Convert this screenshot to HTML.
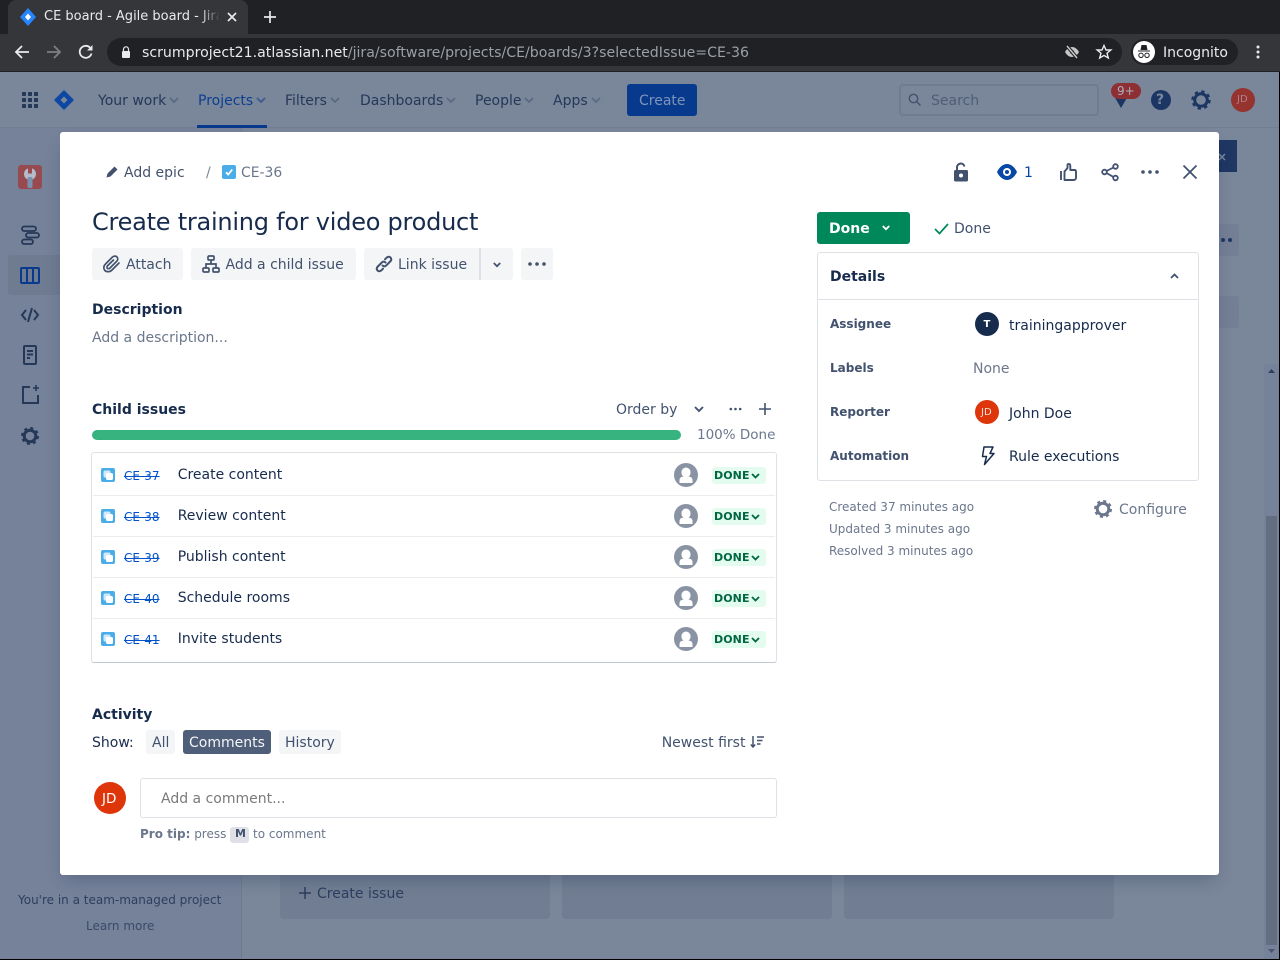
<!DOCTYPE html>
<html><head><meta charset="utf-8"><style>
*{box-sizing:border-box}
html,body{margin:0;padding:0;width:1280px;height:960px;overflow:hidden;background:#7a869a;font-family:"DejaVu Sans","Liberation Sans",sans-serif}
.t{position:absolute;white-space:nowrap;font-size:14px;line-height:20px;color:#42526e}
.b{position:absolute}
svg{position:absolute;overflow:visible}
.nav{color:#253858}
.btn{position:absolute;background:#f4f5f7;border-radius:3px}
.row{position:absolute;left:93px;width:682px;height:1px;background:#ebecf0}
.key{color:#0052cc;font-size:12px;text-decoration:line-through}
.ti{color:#172b4d}
.lz{position:absolute;left:712px;width:54px;height:17px;background:#e3fcef;border-radius:3px}
.lzt{position:absolute;font-size:11px;font-weight:700;color:#006644;line-height:17px;letter-spacing:.1px}
.lab{font-size:12px;font-weight:700;color:#42526e}
.meta{font-size:12px;color:#6b778c}
</style></head><body>
<!-- chrome -->
<div class="b" style="left:0;top:0;width:1280px;height:34px;background:#202124"></div>
<div class="b" style="left:8px;top:0;width:240px;height:34px;background:#35363a;border-radius:8px 8px 0 0"></div>
<svg style="left:20px;top:8px" width="16" height="18" viewBox="0 0 16 18"><path d="M8 0L16 9L8 18L0 9Z" fill="#2684ff"/><path d="M8 5.500L11 9L8 12.500L5 9Z" fill="#fff"/></svg>
<div class="t" style="left:44px;top:6px;width:176px;overflow:hidden;font-size:13px;line-height:20px;color:#e8eaed;padding-top:1px;height:22px">CE board - Agile board - Jira</div>
<div class="b" style="left:200px;top:5px;width:20px;height:24px;background:linear-gradient(90deg,rgba(53,54,58,0),#35363a)"></div>
<svg style="left:227px;top:12px" width="10" height="10" viewBox="0 0 10 10"><path d="M1 1L9 9M9 1L1 9" stroke="#e8eaed" stroke-width="1.700"/></svg>
<svg style="left:264px;top:11px" width="12" height="12" viewBox="0 0 12 12"><path d="M6 0V12M0 6H12" stroke="#e8eaed" stroke-width="1.700"/></svg>
<div class="b" style="left:0;top:34px;width:1280px;height:37px;background:#35363a"></div>
<div class="b" style="left:0;top:71px;width:1280px;height:1px;background:#202124"></div>
<svg style="left:14px;top:44px" width="16" height="16" viewBox="0 0 16 16"><path d="M15 8H2M8 2L2 8L8 14" stroke="#e8eaed" stroke-width="1.800" fill="none"/></svg>
<svg style="left:46px;top:44px" width="16" height="16" viewBox="0 0 16 16"><path d="M1 8H14M8 2L14 8L8 14" stroke="#7f8083" stroke-width="1.800" fill="none"/></svg>
<svg style="left:78px;top:44px" width="16" height="16" viewBox="0 0 16 16"><path d="M13.500 9.500A6 6 0 1 1 12 3.600" stroke="#e8eaed" stroke-width="1.800" fill="none"/><path d="M14.500 1V6.500H9Z" fill="#e8eaed"/></svg>
<div class="b" style="left:107px;top:38px;width:1015px;height:28px;background:#202124;border-radius:14px"></div>
<svg style="left:121px;top:46px" width="10" height="12" viewBox="0 0 10 12"><path d="M2.500 5V3.300a2.500 2.500 0 0 1 5 0V5" stroke="#e8eaed" stroke-width="1.200" fill="none"/><rect x="1" y="5" width="8" height="7" rx="1" fill="#e8eaed"/></svg>
<div class="t" style="left:142px;top:43px;font-size:14.140px;color:#e8eaed">scrumproject21.atlassian.net<span style="color:#9aa0a6">/jira/software/projects/CE/boards/3?selectedIssue=CE-36</span></div>
<svg style="left:1064px;top:45px" width="16" height="14" viewBox="0 0 16 14"><path d="M1 7C3 3.500 5.500 2 8 2S13 3.500 15 7C13 10.500 10.500 12 8 12S3 10.500 1 7Z" fill="#c4c7c5"/><circle cx="8" cy="7" r="2" fill="#202124"/><path d="M3 1L13 13" stroke="#202124" stroke-width="3.500"/><path d="M3 1L13 13" stroke="#c4c7c5" stroke-width="1.500"/></svg>
<svg style="left:1096px;top:44px" width="16" height="16" viewBox="0 0 16 16"><path d="M8 1.500L10 6H14.800L11 9.200L12.300 14L8 11.400L3.700 14L5 9.200L1.200 6H6Z" stroke="#e8eaed" stroke-width="1.400" fill="none"/></svg>
<div class="b" style="left:1131px;top:39px;width:107px;height:26px;background:#202124;border-radius:13px"></div>
<div class="b" style="left:1133px;top:41px;width:22px;height:22px;background:#fff;border-radius:50%"></div>
<svg style="left:1136px;top:45px" width="16" height="14" viewBox="0 0 16 14"><path d="M4.500 5L5.500 0H10.500L11.500 5Z" fill="#202124"/><path d="M2 6H14" stroke="#202124" stroke-width="1"/><circle cx="5" cy="10.300" r="2.200" stroke="#202124" stroke-width="1" fill="none"/><circle cx="11" cy="10.300" r="2.200" stroke="#202124" stroke-width="1" fill="none"/></svg>
<div class="t" style="left:1163px;top:43px;color:#e8eaed">Incognito</div>
<svg style="left:1256px;top:45px" width="4" height="14" viewBox="0 0 4 14"><circle cx="2" cy="2" r="1.500" fill="#e8eaed"/><circle cx="2" cy="7" r="1.500" fill="#e8eaed"/><circle cx="2" cy="12" r="1.500" fill="#e8eaed"/></svg>

<!-- jira nav -->
<div class="b" style="left:0;top:72px;width:1280px;height:56px;background:#7a869a"></div>
<div class="b" style="left:0;top:127px;width:1280px;height:1px;background:#727e93"></div>
<svg style="left:22px;top:92px" width="16" height="16" viewBox="0 0 16 16" fill="#253858"><rect width="4" height="4" rx=".5"/><rect x="6" width="4" height="4" rx=".5"/><rect x="12" width="4" height="4" rx=".5"/><rect y="6" width="4" height="4" rx=".5"/><rect x="6" y="6" width="4" height="4" rx=".5"/><rect x="12" y="6" width="4" height="4" rx=".5"/><rect y="12" width="4" height="4" rx=".5"/><rect x="6" y="12" width="4" height="4" rx=".5"/><rect x="12" y="12" width="4" height="4" rx=".5"/></svg>
<svg style="left:54px;top:90px" width="20" height="20" viewBox="0 0 20 20"><path d="M10 0L20 10L10 20L0 10Z" fill="#0d47a1"/><path d="M10 6.500L13.500 10L10 13.500L6.500 10Z" fill="#7a869a"/></svg>
<div class="t nav" style="left:98px;top:91px">Your work</div>
<div class="t" style="left:198px;top:91px;color:#0b3f91">Projects</div>
<div class="b" style="left:197px;top:125px;width:70px;height:3px;background:#073a8c"></div>
<div class="t nav" style="left:285px;top:91px">Filters</div>
<div class="t nav" style="left:360px;top:91px">Dashboards</div>
<div class="t nav" style="left:475px;top:91px">People</div>
<div class="t nav" style="left:553px;top:91px">Apps</div>
<svg style="left:169px;top:97px" width="10" height="6" viewBox="0 0 10 6"><path d="M1 1L5 5L9 1" stroke="#5a6a85" stroke-width="1.800" fill="none"/></svg>
<svg style="left:256px;top:97px" width="10" height="6" viewBox="0 0 10 6"><path d="M1 1L5 5L9 1" stroke="#3a5a90" stroke-width="1.800" fill="none"/></svg>
<svg style="left:330px;top:97px" width="10" height="6" viewBox="0 0 10 6"><path d="M1 1L5 5L9 1" stroke="#5a6a85" stroke-width="1.800" fill="none"/></svg>
<svg style="left:446px;top:97px" width="10" height="6" viewBox="0 0 10 6"><path d="M1 1L5 5L9 1" stroke="#5a6a85" stroke-width="1.800" fill="none"/></svg>
<svg style="left:524px;top:97px" width="10" height="6" viewBox="0 0 10 6"><path d="M1 1L5 5L9 1" stroke="#5a6a85" stroke-width="1.800" fill="none"/></svg>
<svg style="left:591px;top:97px" width="10" height="6" viewBox="0 0 10 6"><path d="M1 1L5 5L9 1" stroke="#5a6a85" stroke-width="1.800" fill="none"/></svg>
<div class="b" style="left:627px;top:84px;width:70px;height:32px;background:#073a8c;border-radius:3px"></div>
<div class="t" style="left:639px;top:91px;color:#7f93b8">Create</div>
<div class="b" style="left:899px;top:84px;width:200px;height:32px;border:2px solid #6f7b91;border-radius:4px"></div>
<svg style="left:908px;top:93px" width="14" height="14" viewBox="0 0 14 14"><circle cx="5.500" cy="5.500" r="4.200" stroke="#42526e" stroke-width="1.400" fill="none"/><path d="M8.800 8.800L12.500 12.500" stroke="#42526e" stroke-width="1.400"/></svg>
<div class="t" style="left:931px;top:91px;color:#4f5d78">Search</div>
<svg style="left:1114px;top:96px" width="14" height="12" viewBox="0 0 14 12"><path d="M0 0H14L7 12Z" fill="#1c3664"/></svg>
<div class="b" style="left:1111px;top:83px;width:30px;height:16px;background:#8e2f33;border-radius:8px"></div>
<div class="t" style="left:1117px;top:81px;color:#aab0bc;font-size:12px">9+</div>
<div class="b" style="left:1151px;top:90px;width:20px;height:20px;background:#1c3664;border-radius:50%"></div>
<div class="t" style="left:1156px;top:90px;color:#7a869a;font-weight:700">?</div>
<svg style="left:1191px;top:90px" width="20" height="20" viewBox="0 0 20 20"><circle cx="10" cy="10" r="6.300" stroke="#1c3664" stroke-width="3" fill="none"/><circle cx="10" cy="10" r="8.500" stroke="#1c3664" stroke-width="2.400" stroke-dasharray="3.300 3.370" fill="none"/></svg>
<div class="b" style="left:1231px;top:88px;width:24px;height:24px;background:#95332f;border-radius:50%"></div>
<div class="t" style="left:1237px;top:90px;color:#b0838a;font-size:10px">JD</div>

<!-- sidebar -->
<div class="b" style="left:0;top:128px;width:241px;height:832px;background:#76829a"></div>
<div class="b" style="left:241px;top:128px;width:1px;height:832px;background:#6f7b91"></div>
<div class="b" style="left:18px;top:165px;width:24px;height:24px;background:#974a4f;border-radius:3px"></div>
<svg style="left:22px;top:168px" width="16" height="20" viewBox="0 0 16 20"><circle cx="8" cy="6" r="6" fill="#b5bcc9"/><rect x="6" y="0" width="4" height="5.500" fill="#974a4f"/><rect x="5.500" y="9" width="5" height="11" rx="1.500" fill="#7891ae"/></svg>
<div class="b" style="left:8px;top:255px;width:52px;height:40px;background:#6f7b91;border-radius:3px 0 0 3px"></div>
<svg style="left:20px;top:224px" width="20" height="22" viewBox="0 0 20 22" fill="none" stroke="#253858" stroke-width="1.800"><rect x="2" y="2.500" width="14" height="4.500" rx="2.250"/><rect x="6" y="9" width="13" height="4.500" rx="2.250"/><rect x="2" y="15.500" width="11" height="4.500" rx="2.250"/></svg>
<svg style="left:20px;top:267px" width="20" height="17" viewBox="0 0 20 17" fill="none" stroke="#073a8c" stroke-width="2"><rect x="1" y="1" width="18" height="15" rx="1"/><path d="M7 1V16M13 1V16"/></svg>
<svg style="left:21px;top:306px" width="18" height="18" viewBox="0 0 18 18" fill="none" stroke="#253858" stroke-width="2"><path d="M5 4L1 9L5 14M13 4L17 9L13 14M11 2L7 16"/></svg>
<svg style="left:23px;top:345px" width="14" height="20" viewBox="0 0 14 20" fill="none" stroke="#253858" stroke-width="2"><rect x="1" y="1" width="12" height="18" rx="1"/><path d="M4 6H10M4 9.500H10M4 13H7"/></svg>
<svg style="left:21px;top:385px" width="18" height="19" viewBox="0 0 18 19" fill="none" stroke="#253858" stroke-width="2"><path d="M9 2H2V18H17V10"/><path d="M15 0V6M12 3H18" stroke-width="1.600"/></svg>
<svg style="left:21px;top:427px" width="18" height="18" viewBox="0 0 18 18"><circle cx="9" cy="9" r="5.800" stroke="#253858" stroke-width="3" fill="none"/><circle cx="9" cy="9" r="7.800" stroke="#253858" stroke-width="2.400" stroke-dasharray="3 3.120" fill="none"/></svg>
<div class="t" style="left:18px;top:890px;font-size:12px;color:#2d3e5e">You're in a team-managed project</div>
<div class="t" style="left:86px;top:916px;font-size:12px;color:#3a4a68">Learn more</div>

<!-- board bg -->
<div class="b" style="left:280px;top:860px;width:270px;height:59px;background:#717d92;border-radius:0 0 4px 4px"></div>
<div class="b" style="left:562px;top:860px;width:270px;height:59px;background:#717d92;border-radius:0 0 4px 4px"></div>
<div class="b" style="left:844px;top:860px;width:270px;height:59px;background:#717d92;border-radius:0 0 4px 4px"></div>
<svg style="left:299px;top:887px" width="12" height="12" viewBox="0 0 12 12"><path d="M6 0V12M0 6H12" stroke="#2d3e5e" stroke-width="1.500"/></svg>
<div class="t" style="left:317px;top:884px;color:#2d3e5e">Create issue</div>
<div class="b" style="left:1219px;top:140px;width:18px;height:32px;background:#1f3763"></div>
<svg style="left:1218px;top:153px" width="8" height="8" viewBox="0 0 8 8"><path d="M1 1L7 7M7 1L1 7" stroke="#7a869a" stroke-width="1.500"/></svg>
<div class="b" style="left:1219px;top:224px;width:20px;height:32px;background:#747f95;border-radius:0 3px 3px 0"></div>
<div class="b" style="left:1221px;top:238px;width:4px;height:4px;background:#1f3763;border-radius:50%"></div>
<div class="b" style="left:1228px;top:238px;width:4px;height:4px;background:#1f3763;border-radius:50%"></div>
<div class="b" style="left:1219px;top:296px;width:20px;height:32px;background:#747f95;border-radius:0 3px 3px 0"></div>
<!-- scrollbar -->
<div class="b" style="left:1264px;top:364px;width:15px;height:595px;background:#76829a"></div>
<div class="b" style="left:1266px;top:516px;width:11px;height:429px;background:#636e83"></div>
<svg style="left:1268px;top:369px" width="7" height="4" viewBox="0 0 7 4"><path d="M3.500 0L7 4H0Z" fill="#2d3e5e"/></svg>
<svg style="left:1268px;top:949px" width="7" height="4" viewBox="0 0 7 4"><path d="M0 0H7L3.500 4Z" fill="#4a5670"/></svg>
<div class="b" style="left:1279px;top:72px;width:1px;height:888px;background:#000"></div>
<div class="b" style="left:0;top:959px;width:1280px;height:1px;background:#000"></div>

<!-- modal -->
<div class="b" style="left:60px;top:132px;width:1159px;height:743px;background:#fff;border-radius:3px;box-shadow:0 8px 16px -4px rgba(9,30,66,.25)"></div>
<svg style="left:106px;top:165px" width="13" height="13" viewBox="0 0 13 13"><path d="M0.500 12.500L1.500 8.500L8.500 1.500L11.500 4.500L4.500 11.500Z" fill="#42526e"/></svg>
<div class="t" style="left:124px;top:163px">Add epic</div>
<div class="t" style="left:206px;top:163px;color:#7a869a">/</div>
<div class="b" style="left:222px;top:165px;width:14px;height:14px;background:#4bade8;border-radius:2px"></div>
<svg style="left:222px;top:165px" width="14" height="14" viewBox="0 0 14 14"><path d="M4 7.200L6.200 9.500L10.200 4.500" stroke="#fff" stroke-width="1.800" fill="none"/></svg>
<div class="t" style="left:241px;top:163px;color:#6b778c;font-size:13.900px">CE-36</div>

<div class="t" style="left:92px;top:206px;font-size:24px;line-height:32px;letter-spacing:-.24px;color:#172b4d">Create training for video product</div>

<div class="btn" style="left:92px;top:248px;width:91px;height:32px"></div>
<svg style="left:103px;top:255px" width="18" height="18" viewBox="0 0 18 18"><path d="M16 8L9 15C6.500 17.500 2.800 17 1.500 15S0.800 10.500 2.500 9L9.500 2C11 .8 13 .8 14 2S15 5 13.800 6.200L7 13C6 14 4.800 13.800 4.300 13.300S3.800 11.500 4.800 10.500L10.500 5" stroke="#42526e" stroke-width="1.700" fill="none" stroke-linecap="round"/></svg>
<div class="t" style="left:126px;top:255px">Attach</div>
<div class="btn" style="left:191px;top:248px;width:165px;height:32px"></div>
<svg style="left:202px;top:255px" width="18" height="18" viewBox="0 0 18 18" fill="none" stroke="#42526e" stroke-width="1.700"><rect x="6" y="1" width="6" height="4" rx="1"/><rect x="1" y="13" width="6" height="4" rx="1"/><rect x="11" y="13" width="6" height="4" rx="1"/><path d="M9 5V9M4 13V9H14V13"/></svg>
<div class="t" style="left:225.500px;top:255px">Add a child issue</div>
<div class="btn" style="left:364px;top:248px;width:149px;height:32px"></div>
<div class="b" style="left:479px;top:248px;width:2px;height:32px;background:#dfe1e6"></div>
<svg style="left:375px;top:255px" width="18" height="18" viewBox="0 0 18 18" fill="none" stroke="#42526e" stroke-width="2" stroke-linecap="round"><path d="M7.500 10.500C8.500 11.500 10 11.700 11 10.700L15.200 6.500C16.500 5.200 16.500 3.700 15.500 2.600S12.800 1.500 11.500 2.800L10 4.300"/><path d="M10.500 7.500C9.500 6.500 8 6.300 7 7.300L2.800 11.500C1.500 12.800 1.500 14.300 2.500 15.400S5.200 16.500 6.500 15.200L8 13.700"/></svg>
<div class="t" style="left:398px;top:255px">Link issue</div>
<svg style="left:493px;top:262px" width="8" height="6" viewBox="0 0 8 6"><path d="M.8 1L4 4.200L7.200 1" stroke="#42526e" stroke-width="1.800" fill="none"/></svg>
<div class="btn" style="left:521px;top:248px;width:32px;height:32px"></div>
<svg style="left:528px;top:262px" width="18" height="4" viewBox="0 0 18 4" fill="#42526e"><circle cx="2" cy="2" r="1.800"/><circle cx="9" cy="2" r="1.800"/><circle cx="16" cy="2" r="1.800"/></svg>

<div class="t" style="left:92px;top:300px;font-weight:700;color:#172b4d">Description</div>
<div class="t" style="left:92px;top:328px;color:#6b778c">Add a description...</div>

<div class="t" style="left:92px;top:400px;font-weight:700;color:#172b4d">Child issues</div>
<div class="t" style="left:616px;top:400px">Order by</div>
<svg style="left:694px;top:406px" width="10" height="7" viewBox="0 0 10 7"><path d="M1 1L5 5L9 1" stroke="#42526e" stroke-width="1.900" fill="none"/></svg>
<svg style="left:729px;top:407px" width="13" height="4" viewBox="0 0 13 4" fill="#42526e"><circle cx="1.800" cy="2" r="1.300"/><circle cx="6.500" cy="2" r="1.300"/><circle cx="11.200" cy="2" r="1.300"/></svg>
<svg style="left:759px;top:403px" width="12" height="12" viewBox="0 0 12 12"><path d="M6 0V12M0 6H12" stroke="#42526e" stroke-width="1.600"/></svg>
<div class="b" style="left:92px;top:430px;width:589px;height:10px;background:#36b37e;border-radius:5px"></div>
<div class="t" style="left:697px;top:425px;color:#6b778c;font-size:13.500px">100% Done</div>

<div class="b" style="left:91px;top:452px;width:686px;height:211px;border:1px solid #dfe1e6;border-bottom:1px solid #c1c7d0;border-radius:3px"></div>
<div class="row" style="top:495px"></div><div class="row" style="top:536px"></div><div class="row" style="top:577px"></div><div class="row" style="top:618px"></div>

<!-- ROWS -->
<svg style="left:101px;top:468px" width="14" height="14" viewBox="0 0 14 14"><rect width="14" height="14" rx="2" fill="#4bade8"/><rect x="2.500" y="2.500" width="7" height="7" rx="1.800" fill="#cfe9fa"/><rect x="5" y="5" width="7" height="7" rx="1.800" fill="#fff"/></svg>
<div class="t key" style="left:124px;top:466px">CE-37</div><div class="t ti" style="left:177.700px;top:465px">Create content</div>
<svg style="left:674px;top:463px" width="24" height="24" viewBox="0 0 24 24"><circle cx="12" cy="12" r="12" fill="#8993a4"/><path d="M12 4.500A4.500 4.500 0 0 1 16.500 9V10A4.500 4.500 0 0 1 7.500 10V9A4.500 4.500 0 0 1 12 4.500Z" fill="#fff"/><path d="M5.500 20V17C5.500 15 7 13.700 9 13.700H15C17 13.700 18.500 15 18.500 17V20Z" fill="#fff"/></svg>
<div class="lz" style="top:467px"></div><div class="lzt" style="left:714px;top:467px">DONE</div><svg style="left:751px;top:473px" width="9" height="6" viewBox="0 0 9 6"><path d="M1 1L4.500 4.500L8 1" stroke="#006644" stroke-width="1.800" fill="none"/></svg>

<svg style="left:101px;top:509px" width="14" height="14" viewBox="0 0 14 14"><rect width="14" height="14" rx="2" fill="#4bade8"/><rect x="2.500" y="2.500" width="7" height="7" rx="1.800" fill="#cfe9fa"/><rect x="5" y="5" width="7" height="7" rx="1.800" fill="#fff"/></svg>
<div class="t key" style="left:124px;top:507px">CE-38</div><div class="t ti" style="left:177.700px;top:506px">Review content</div>
<svg style="left:674px;top:504px" width="24" height="24" viewBox="0 0 24 24"><circle cx="12" cy="12" r="12" fill="#8993a4"/><path d="M12 4.500A4.500 4.500 0 0 1 16.500 9V10A4.500 4.500 0 0 1 7.500 10V9A4.500 4.500 0 0 1 12 4.500Z" fill="#fff"/><path d="M5.500 20V17C5.500 15 7 13.700 9 13.700H15C17 13.700 18.500 15 18.500 17V20Z" fill="#fff"/></svg>
<div class="lz" style="top:508px"></div><div class="lzt" style="left:714px;top:508px">DONE</div><svg style="left:751px;top:514px" width="9" height="6" viewBox="0 0 9 6"><path d="M1 1L4.500 4.500L8 1" stroke="#006644" stroke-width="1.800" fill="none"/></svg>

<svg style="left:101px;top:550px" width="14" height="14" viewBox="0 0 14 14"><rect width="14" height="14" rx="2" fill="#4bade8"/><rect x="2.500" y="2.500" width="7" height="7" rx="1.800" fill="#cfe9fa"/><rect x="5" y="5" width="7" height="7" rx="1.800" fill="#fff"/></svg>
<div class="t key" style="left:124px;top:548px">CE-39</div><div class="t ti" style="left:177.700px;top:547px">Publish content</div>
<svg style="left:674px;top:545px" width="24" height="24" viewBox="0 0 24 24"><circle cx="12" cy="12" r="12" fill="#8993a4"/><path d="M12 4.500A4.500 4.500 0 0 1 16.500 9V10A4.500 4.500 0 0 1 7.500 10V9A4.500 4.500 0 0 1 12 4.500Z" fill="#fff"/><path d="M5.500 20V17C5.500 15 7 13.700 9 13.700H15C17 13.700 18.500 15 18.500 17V20Z" fill="#fff"/></svg>
<div class="lz" style="top:549px"></div><div class="lzt" style="left:714px;top:549px">DONE</div><svg style="left:751px;top:555px" width="9" height="6" viewBox="0 0 9 6"><path d="M1 1L4.500 4.500L8 1" stroke="#006644" stroke-width="1.800" fill="none"/></svg>

<svg style="left:101px;top:591px" width="14" height="14" viewBox="0 0 14 14"><rect width="14" height="14" rx="2" fill="#4bade8"/><rect x="2.500" y="2.500" width="7" height="7" rx="1.800" fill="#cfe9fa"/><rect x="5" y="5" width="7" height="7" rx="1.800" fill="#fff"/></svg>
<div class="t key" style="left:124px;top:589px">CE-40</div><div class="t ti" style="left:177.700px;top:588px">Schedule rooms</div>
<svg style="left:674px;top:586px" width="24" height="24" viewBox="0 0 24 24"><circle cx="12" cy="12" r="12" fill="#8993a4"/><path d="M12 4.500A4.500 4.500 0 0 1 16.500 9V10A4.500 4.500 0 0 1 7.500 10V9A4.500 4.500 0 0 1 12 4.500Z" fill="#fff"/><path d="M5.500 20V17C5.500 15 7 13.700 9 13.700H15C17 13.700 18.500 15 18.500 17V20Z" fill="#fff"/></svg>
<div class="lz" style="top:590px"></div><div class="lzt" style="left:714px;top:590px">DONE</div><svg style="left:751px;top:596px" width="9" height="6" viewBox="0 0 9 6"><path d="M1 1L4.500 4.500L8 1" stroke="#006644" stroke-width="1.800" fill="none"/></svg>

<svg style="left:101px;top:632px" width="14" height="14" viewBox="0 0 14 14"><rect width="14" height="14" rx="2" fill="#4bade8"/><rect x="2.500" y="2.500" width="7" height="7" rx="1.800" fill="#cfe9fa"/><rect x="5" y="5" width="7" height="7" rx="1.800" fill="#fff"/></svg>
<div class="t key" style="left:124px;top:630px">CE-41</div><div class="t ti" style="left:177.700px;top:629px">Invite students</div>
<svg style="left:674px;top:627px" width="24" height="24" viewBox="0 0 24 24"><circle cx="12" cy="12" r="12" fill="#8993a4"/><path d="M12 4.500A4.500 4.500 0 0 1 16.500 9V10A4.500 4.500 0 0 1 7.500 10V9A4.500 4.500 0 0 1 12 4.500Z" fill="#fff"/><path d="M5.500 20V17C5.500 15 7 13.700 9 13.700H15C17 13.700 18.500 15 18.500 17V20Z" fill="#fff"/></svg>
<div class="lz" style="top:631px"></div><div class="lzt" style="left:714px;top:631px">DONE</div><svg style="left:751px;top:637px" width="9" height="6" viewBox="0 0 9 6"><path d="M1 1L4.500 4.500L8 1" stroke="#006644" stroke-width="1.800" fill="none"/></svg>

<!-- activity -->
<div class="t" style="left:92px;top:705px;font-weight:700;color:#172b4d">Activity</div>
<div class="t ti" style="left:92px;top:733px">Show:</div>
<div class="btn" style="left:146px;top:730px;width:29px;height:24px"></div><div class="t" style="left:152px;top:733px">All</div>
<div class="b" style="left:183px;top:730px;width:88px;height:24px;background:#505f79;border-radius:3px"></div><div class="t" style="left:189px;top:733px;color:#f4f5f7">Comments</div>
<div class="btn" style="left:279px;top:730px;width:62px;height:24px"></div><div class="t" style="left:285px;top:733px">History</div>
<div class="t" style="left:661.700px;top:733px">Newest first</div>
<svg style="left:750px;top:736px" width="14" height="12" viewBox="0 0 14 12" fill="none" stroke="#42526e" stroke-width="1.500"><path d="M3 0V11M.8 8.500L3 11L5.200 8.500M7 1H14M7 4.500H12.500M7 8H10.500"/></svg>

<div class="b" style="left:94px;top:782px;width:32px;height:32px;background:#de350b;border-radius:50%"></div>
<div class="t" style="left:102px;top:789px;color:#fff;font-size:13.500px">JD</div>
<div class="b" style="left:140px;top:778px;width:637px;height:40px;background:#fff;border:1px solid #dfe1e6;border-radius:3px"></div>
<div class="t" style="left:161px;top:789px;color:#7a7a7a">Add a comment...</div>
<div class="t" style="left:140px;top:824px;font-size:12px;color:#6b778c"><b>Pro tip:</b> press</div>
<div class="b" style="left:230px;top:827px;width:19px;height:16px;background:#dfe1e6;border-radius:3px"></div>
<div class="t" style="left:235px;top:824px;font-size:11px;font-weight:700;color:#42526e">M</div>
<div class="t" style="left:253px;top:824px;font-size:12px;color:#6b778c">to comment</div>

<!-- top right icons -->
<svg style="left:953px;top:162px" width="16" height="20" viewBox="0 0 16 20"><path d="M4 8V5.500A3.800 3.800 0 0 1 11.500 4.500" stroke="#42526e" stroke-width="2" fill="none"/><rect x="1" y="8" width="14" height="11.500" rx="1.500" fill="#42526e"/><circle cx="8" cy="13.500" r="2" fill="#fff"/></svg>
<svg style="left:997px;top:164px" width="20" height="16" viewBox="0 0 20 16"><path d="M0 8C2.500 2.700 6.500 0 10 0S17.500 2.700 20 8C17.500 13.300 13.500 16 10 16S2.500 13.300 0 8Z" fill="#0747a6"/><circle cx="10" cy="8" r="4" fill="#fff"/><circle cx="10" cy="8" r="2" fill="#0747a6"/></svg>
<div class="t" style="left:1024px;top:163px;color:#0747a6">1</div>
<svg style="left:1060px;top:163px" width="17" height="18" viewBox="0 0 17 18" fill="none" stroke="#42526e" stroke-width="1.900"><path d="M1 8V17"/><path d="M4.500 8.500L7.500 5V2C7.500 1 8.200 .9 8.800 .9C9.800 .9 10.300 1.800 10.300 3V7H14.500C15.500 7 16 7.800 16 8.800V14.500C16 16 15 17 14 17H4.500Z" stroke-linejoin="round"/></svg>
<svg style="left:1101px;top:163px" width="18" height="18" viewBox="0 0 18 18" fill="none" stroke="#42526e" stroke-width="1.800"><circle cx="14.500" cy="3.500" r="2.300"/><circle cx="3.500" cy="9" r="2.300"/><circle cx="14.500" cy="15" r="2.300"/><path d="M5.500 8L12.500 4.500M5.500 10L12.500 14"/></svg>
<svg style="left:1141px;top:170px" width="18" height="4" viewBox="0 0 18 4" fill="#42526e"><circle cx="2" cy="2" r="1.800"/><circle cx="9" cy="2" r="1.800"/><circle cx="16" cy="2" r="1.800"/></svg>
<svg style="left:1182px;top:164px" width="16" height="16" viewBox="0 0 16 16"><path d="M1.500 1.500L14.500 14.500M14.500 1.500L1.500 14.500" stroke="#42526e" stroke-width="1.800"/></svg>

<!-- status -->
<div class="b" style="left:817px;top:212px;width:93px;height:32px;background:#00875a;border-radius:3px"></div>
<div class="t" style="left:829px;top:219px;color:#fff;font-weight:700">Done</div>
<svg style="left:882px;top:225px" width="8" height="6" viewBox="0 0 8 6"><path d="M.8 1L4 4.200L7.200 1" stroke="#fff" stroke-width="1.800" fill="none"/></svg>
<svg style="left:934px;top:222px" width="15" height="13" viewBox="0 0 15 13"><path d="M1 7L5.500 11.500L14 2" stroke="#00875a" stroke-width="1.700" fill="none"/></svg>
<div class="t" style="left:954px;top:219px">Done</div>

<!-- details -->
<div class="b" style="left:817px;top:252px;width:382px;height:229px;border:1px solid #dfe1e6;border-radius:3px"></div>
<div class="b" style="left:818px;top:299px;width:380px;height:1px;background:#dfe1e6"></div>
<div class="t" style="left:830px;top:267px;font-weight:700;color:#172b4d">Details</div>
<svg style="left:1170px;top:273px" width="9" height="6" viewBox="0 0 9 6"><path d="M1 5L4.500 1.500L8 5" stroke="#42526e" stroke-width="1.800" fill="none"/></svg>
<div class="t lab" style="left:830px;top:314px">Assignee</div>
<div class="b" style="left:975px;top:312px;width:24px;height:24px;background:#172b4d;border-radius:50%"></div>
<div class="t" style="left:983.500px;top:315px;color:#fff;font-size:10px;font-weight:700">T</div>
<div class="t ti" style="left:1009px;top:316px">trainingapprover</div>
<div class="t lab" style="left:830px;top:358px">Labels</div>
<div class="t" style="left:973px;top:359px;color:#6b778c">None</div>
<div class="t lab" style="left:830px;top:402px">Reporter</div>
<div class="b" style="left:975px;top:400px;width:24px;height:24px;background:#de350b;border-radius:50%"></div>
<div class="t" style="left:981px;top:403px;color:#fff;font-size:10px;opacity:.85">JD</div>
<div class="t ti" style="left:1009px;top:404px">John Doe</div>
<div class="t lab" style="left:830px;top:446px">Automation</div>
<svg style="left:981px;top:446px" width="14" height="20" viewBox="0 0 14 20"><path d="M3 1H12L9 7.500H13L3.500 18.500L5.500 10.500H1.500Z" stroke="#172b4d" stroke-width="1.500" fill="none" stroke-linejoin="round"/></svg>
<div class="t ti" style="left:1009px;top:447px">Rule executions</div>

<div class="t meta" style="left:829px;top:497px">Created 37 minutes ago</div>
<div class="t meta" style="left:829px;top:519px">Updated 3 minutes ago</div>
<div class="t meta" style="left:829px;top:541px">Resolved 3 minutes ago</div>
<svg style="left:1094px;top:500px" width="18" height="18" viewBox="0 0 18 18"><circle cx="9" cy="9" r="5.800" stroke="#6b778c" stroke-width="3" fill="none"/><circle cx="9" cy="9" r="7.800" stroke="#6b778c" stroke-width="2.400" stroke-dasharray="3 3.120" fill="none"/></svg>
<div class="t" style="left:1119px;top:500px;color:#6b778c">Configure</div>
</body></html>
